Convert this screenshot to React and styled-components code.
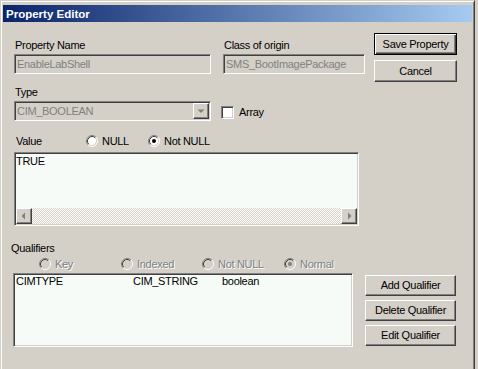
import styled, { createGlobalStyle } from "styled-components";

const GlobalStyle = createGlobalStyle`
  html, body {
    margin: 0;
    padding: 0;
    background: #d4d0c8;
  }
  body {
    font-family: "Liberation Sans", Arial, sans-serif;
    font-size: 11px;
    letter-spacing: -0.3px;
    color: #000;
  }
  * {
    box-sizing: border-box;
  }
`;

const qualifiers = [{ name: "CIMTYPE", type: "CIM_STRING", value: "boolean" }];

const Radio = ({ checked, disabled }) => {
  const fill = disabled ? "#d4d0c8" : "#ffffff";
  const dot = disabled ? "#808080" : "#000000";
  return (
    <svg width="12" height="12" viewBox="0 0 12 12">
      <circle cx="6" cy="6" r="5" fill={fill} />
      <path d="M2.11 9.89 A5.5 5.5 0 0 1 9.89 2.11" stroke="#808080" fill="none" />
      <path d="M9.89 2.11 A5.5 5.5 0 0 1 2.11 9.89" stroke="#ffffff" fill="none" />
      <path d="M2.82 9.18 A4.5 4.5 0 0 1 9.18 2.82" stroke="#404040" fill="none" />
      <path d="M9.18 2.82 A4.5 4.5 0 0 1 2.82 9.18" stroke="#d4d0c8" fill="none" />
      {checked && <circle cx="6" cy="6" r="2" fill={dot} />}
    </svg>
  );
};

const Arrow = ({ dir }) => (
  <svg width="8" height="8" viewBox="0 0 8 8">
    {dir === "left" && <path d="M5 0.5 L1.5 4 L5 7.5 Z" fill="#808080" />}
    {dir === "right" && <path d="M3 0.5 L6.5 4 L3 7.5 Z" fill="#808080" />}
    {dir === "down" && <path d="M0.5 2.5 L7.5 2.5 L4 6 Z" fill="#808080" />}
  </svg>
);

const App = () => {
  return (
    <>
      <GlobalStyle />
      <Window>
        <TitleBar>Property Editor</TitleBar>
        <Body>
          <TopRow>
            <FieldGroup $width={197} $gap={12}>
              <Label>Property Name</Label>
              <TextField>EnableLabShell</TextField>
            </FieldGroup>
            <FieldGroup $width={142} $gap={9}>
              <Label>Class of origin</Label>
              <TextField>SMS_BootImagePackage</TextField>
            </FieldGroup>
            <ButtonColumn $gap={5}>
              <DefaultButton $width={83} $height={22}>Save Property</DefaultButton>
              <Button $width={83} $height={22}>Cancel</Button>
            </ButtonColumn>
          </TopRow>

          <Label $top={4}>Type</Label>
          <SelectRow>
            <Select>
              <SelectText>CIM_BOOLEAN</SelectText>
              <DropButton>
                <Arrow dir="down" />
              </DropButton>
            </Select>
            <Checkbox />
            <CheckLabel>Array</CheckLabel>
          </SelectRow>

          <ValueRow>
            <ValueLabel>Value</ValueLabel>
            <RadioOption $width={62}>
              <Radio />
              <span>NULL</span>
            </RadioOption>
            <RadioOption>
              <Radio checked />
              <span>Not NULL</span>
            </RadioOption>
          </ValueRow>

          <ValueBox>
            <ValueText>TRUE</ValueText>
            <HScroll>
              <ScrollButton>
                <Arrow dir="left" />
              </ScrollButton>
              <ScrollTrack />
              <ScrollButton>
                <Arrow dir="right" />
              </ScrollButton>
            </HScroll>
          </ValueBox>

          <QualifiersLabel>Qualifiers</QualifiersLabel>
          <QualRadioRow>
            <RadioOption $width={82} $disabled>
              <Radio disabled />
              <span>Key</span>
            </RadioOption>
            <RadioOption $width={81} $disabled>
              <Radio disabled />
              <span>Indexed</span>
            </RadioOption>
            <RadioOption $width={82} $disabled>
              <Radio disabled />
              <span>Not NULL</span>
            </RadioOption>
            <RadioOption $disabled>
              <Radio disabled checked />
              <span>Normal</span>
            </RadioOption>
          </QualRadioRow>

          <QualRow>
            <QualList>
              {qualifiers.map((q) => (
                <QualItem key={q.name}>
                  <span>{q.name}</span>
                  <span>{q.type}</span>
                  <span>{q.value}</span>
                </QualItem>
              ))}
            </QualList>
            <ButtonColumn $gap={4} $top={2} $left={12}>
              <Button $width={91} $height={21}>Add Qualifier</Button>
              <Button $width={91} $height={21}>Delete Qualifier</Button>
              <Button $width={91} $height={21}>Edit Qualifier</Button>
            </ButtonColumn>
          </QualRow>
        </Body>
      </Window>
    </>
  );
};

export default App;

const Window = styled.div`
  width: 475px;
  height: 369px;
  overflow: hidden;
  background: #d4d0c8;
  border: 1px solid;
  border-bottom: none;
  border-color: #d4d0c8 #404040 #d4d0c8 #d4d0c8;
  box-shadow: inset 1px 1px #ffffff, inset -1px 0 #808080;
  padding: 4px 2px 0 2px;
`;

const TitleBar = styled.div`
  height: 17px;
  display: flex;
  align-items: center;
  padding-left: 3px;
  background: linear-gradient(to right, #0a246a, #a6caf0);
  color: #ffffff;
  font-weight: 700;
  font-size: 11.5px;
  letter-spacing: 0;
`;

const Body = styled.div`
  padding: 11px 0 0 11px;
`;

const TopRow = styled.div`
  display: flex;
  align-items: flex-start;
`;

const FieldGroup = styled.div`
  width: ${(p) => p.$width}px;
  margin-right: ${(p) => p.$gap}px;
  margin-top: 6px;
`;

const Label = styled.div`
  height: 13px;
  line-height: 13px;
  padding-left: 1px;
  margin-top: ${(p) => p.$top || 0}px;
  margin-bottom: 2px;
`;

const sunken = `
  border: 1px solid;
  border-color: #808080 #ffffff #ffffff #808080;
  box-shadow: inset 1px 1px #404040, inset -1px -1px #d4d0c8;
`;

const raised = `
  border: 1px solid;
  border-color: #ffffff #404040 #404040 #ffffff;
  box-shadow: inset -1px -1px #808080;
`;

const TextField = styled.div`
  ${sunken}
  height: 20px;
  display: flex;
  align-items: center;
  padding: 0 2px;
  color: #808080;
  line-height: 13px;
  white-space: nowrap;
  overflow: hidden;
`;

const ButtonColumn = styled.div`
  display: flex;
  flex-direction: column;
  gap: ${(p) => p.$gap}px;
  margin-top: ${(p) => p.$top || 0}px;
  margin-left: ${(p) => p.$left || 0}px;
`;

const Button = styled.div`
  ${raised}
  width: ${(p) => p.$width}px;
  height: ${(p) => p.$height}px;
  display: flex;
  align-items: center;
  justify-content: center;
  background: #d4d0c8;
  line-height: 13px;
`;

const DefaultButton = styled(Button)`
  border: 1px solid #000000;
  box-shadow: inset 1px 1px #ffffff, inset -1px -1px #404040, inset -2px -2px #808080;
`;

const SelectRow = styled.div`
  display: flex;
  align-items: center;
  margin-top: 2px;
`;

const Select = styled.div`
  ${sunken}
  width: 197px;
  height: 20px;
  display: flex;
  align-items: center;
  padding: 1px;
`;

const SelectText = styled.div`
  flex: 1;
  padding-left: 1px;
  color: #808080;
  line-height: 13px;
`;

const DropButton = styled.div`
  ${raised}
  width: 16px;
  height: 16px;
  display: flex;
  align-items: center;
  justify-content: center;
  background: #d4d0c8;
`;

const Checkbox = styled.div`
  ${sunken}
  width: 13px;
  height: 13px;
  margin: 3px 0 0 10px;
  background: #ffffff;
`;

const CheckLabel = styled.span`
  margin: 3px 0 0 5px;
  line-height: 13px;
`;

const ValueRow = styled.div`
  display: flex;
  align-items: center;
  height: 14px;
  margin-top: 13px;
`;

const ValueLabel = styled.div`
  width: 72px;
  padding-left: 2px;
  line-height: 13px;
`;

const RadioOption = styled.div`
  display: flex;
  align-items: center;
  gap: 4px;
  width: ${(p) => (p.$width ? `${p.$width}px` : "auto")};
  line-height: 13px;
  color: ${(p) => (p.$disabled ? "#808080" : "#000000")};
  text-shadow: ${(p) => (p.$disabled ? "1px 1px #ffffff" : "none")};

  svg {
    flex: none;
  }
`;

const ValueBox = styled.div`
  ${sunken}
  width: 345px;
  height: 74px;
  margin-top: 4px;
  padding: 1px;
  background: #f7fbf7;
  display: flex;
  flex-direction: column;
`;

const ValueText = styled.div`
  flex: 1;
  line-height: 13px;
  padding-top: 1px;
`;

const HScroll = styled.div`
  height: 16px;
  display: flex;
`;

const ScrollButton = styled.div`
  ${raised}
  width: 16px;
  height: 16px;
  display: flex;
  align-items: center;
  justify-content: center;
  background: #d4d0c8;
`;

const ScrollTrack = styled.div`
  flex: 1;
  background: repeating-conic-gradient(#d4d0c8 0% 25%, #ffffff 0% 50%) 0 0 / 2px 2px;
`;

const QualifiersLabel = styled.div`
  line-height: 13px;
  height: 13px;
  margin-top: 16px;
  margin-left: -3px;
`;

const QualRadioRow = styled.div`
  display: flex;
  align-items: center;
  height: 14px;
  margin-top: 2px;
  padding-left: 25px;
`;

const QualRow = styled.div`
  display: flex;
  align-items: flex-start;
  margin-top: 2px;
`;

const QualList = styled.div`
  ${sunken}
  width: 340px;
  height: 74px;
  margin-left: -1px;
  padding: 1px;
  background: #f7fbf7;
`;

const QualItem = styled.div`
  display: grid;
  grid-template-columns: 117px 89px 1fr;
  line-height: 13px;
  padding-left: 1px;
`;
